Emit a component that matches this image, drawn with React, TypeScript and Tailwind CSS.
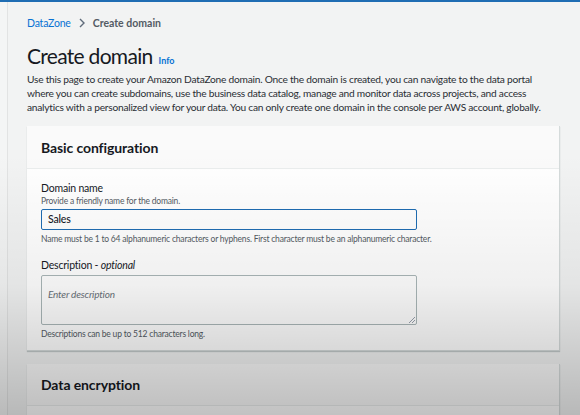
import React from 'react'

export default function App() {
  return (
    <div
      className="relative w-[580px] h-[415px] overflow-hidden bg-[#f2f3f3] text-[#16191f]"
      style={{ fontFamily: 'Lato, "Open Sans", Arial, sans-serif' }}
    >
      <div className="h-[2px] bg-[#1f6db3]" />
      <div className="flex h-full">
        <div className="w-[8px] shrink-0 bg-[#f4f5f5] border-r border-[#e2e3e3]" />
        <main className="flex-1 pl-[19px] pr-[20px]">
          <Breadcrumbs />
          <Header />
          <BasicConfiguration />
          <DataEncryption />
        </main>
      </div>
      <div className="pointer-events-none absolute inset-x-0 bottom-0 h-[260px] bg-gradient-to-b from-transparent via-black/[0.06] to-black/[0.24]" />
    </div>
  )
}

function Breadcrumbs() {
  return (
    <div className="flex items-center pt-[14px] text-[10.5px] leading-[14px] tracking-[-0.2px]">
      <span className="text-[#0972d3]">DataZone</span>
      <svg className="mx-[7px]" width="8" height="10" viewBox="0 0 8 10" fill="none">
        <path d="M2 1l4 4-4 4" stroke="#5f6b7a" strokeWidth="1.4" />
      </svg>
      <span className="font-bold text-[#545b64] tracking-[0px]">Create domain</span>
    </div>
  )
}

function Header() {
  return (
    <div className="mt-[12px]">
      <div className="flex items-baseline">
        <h1 className="text-[21px] leading-[28px] font-normal tracking-[-0.7px] text-[#16191f]">Create domain</h1>
        <span className="ml-[6px] text-[9px] font-bold text-[#0972d3]">Info</span>
      </div>
      <p className="mt-[2px] whitespace-nowrap text-[10.2px] leading-[14px] tracking-[-0.24px] text-[#2a2e33]">
        Use this page to create your Amazon DataZone domain. Once the domain is created, you can navigate to the data portal
        <br />
        where you can create subdomains, use the business data catalog, manage and monitor data across projects, and access
        <br />
        analytics with a personalized view for your data. You can only create one domain in the console per AWS account, globally.
      </p>
    </div>
  )
}

function BasicConfiguration() {
  return (
    <section className="mt-[12px] bg-white border-r border-b border-[#d5dbdb] shadow-[0_1px_1px_rgba(0,28,36,0.2)]">
      <div className="h-[43px] flex items-center px-[14px] bg-[#fafafa] border-b border-[#eaeded]">
        <h2 className="text-[14px] font-bold tracking-[-0.1px]">Basic configuration</h2>
      </div>
      <div className="px-[14px] pt-[12px] pb-[10px] tracking-[-0.2px]">
        <div className="text-[10.5px] leading-[14px]">Domain name</div>
        <div className="text-[8.5px] leading-[12px] text-[#545b64]">Provide a friendly name for the domain.</div>
        <div className="mt-[2px] w-[376px] h-[21px] flex items-center px-[6px] border-[1.5px] border-[#1f6db3] rounded-[2px] bg-white text-[10.5px] font-medium">
          Sales
        </div>
        <div className="mt-[3px] text-[8.5px] leading-[12px] text-[#545b64]">
          Name must be 1 to 64 alphanumeric characters or hyphens. First character must be an alphanumeric character.
        </div>
        <div className="mt-[13px] text-[10.5px] leading-[14px]">
          Description - <i>optional</i>
        </div>
        <div className="relative mt-[3px] w-[376px] h-[50px] px-[6px] pt-[4px] border border-[#aab7b8] rounded-[2px] bg-white">
          <span className="text-[10px] italic text-[#687078]">Enter description</span>
          <svg className="absolute right-[1px] bottom-[1px]" width="6" height="6" viewBox="0 0 6 6">
            <path d="M6 0L0 6M6 3L3 6" stroke="#7d8998" strokeWidth="0.8" />
          </svg>
        </div>
        <div className="mt-[3px] text-[8.5px] leading-[12px] text-[#545b64]">
          Descriptions can be up to 512 characters long.
        </div>
      </div>
    </section>
  )
}

function DataEncryption() {
  return (
    <section className="mt-[13px] bg-white border-r border-[#d5dbdb] shadow-[0_1px_1px_rgba(0,28,36,0.2)]">
      <div className="h-[42px] flex items-center px-[14px] bg-[#fafafa] border-b border-[#eaeded]">
        <h2 className="text-[14px] font-bold tracking-[-0.1px]">Data encryption</h2>
      </div>
      <div className="h-[40px]" />
    </section>
  )
}
